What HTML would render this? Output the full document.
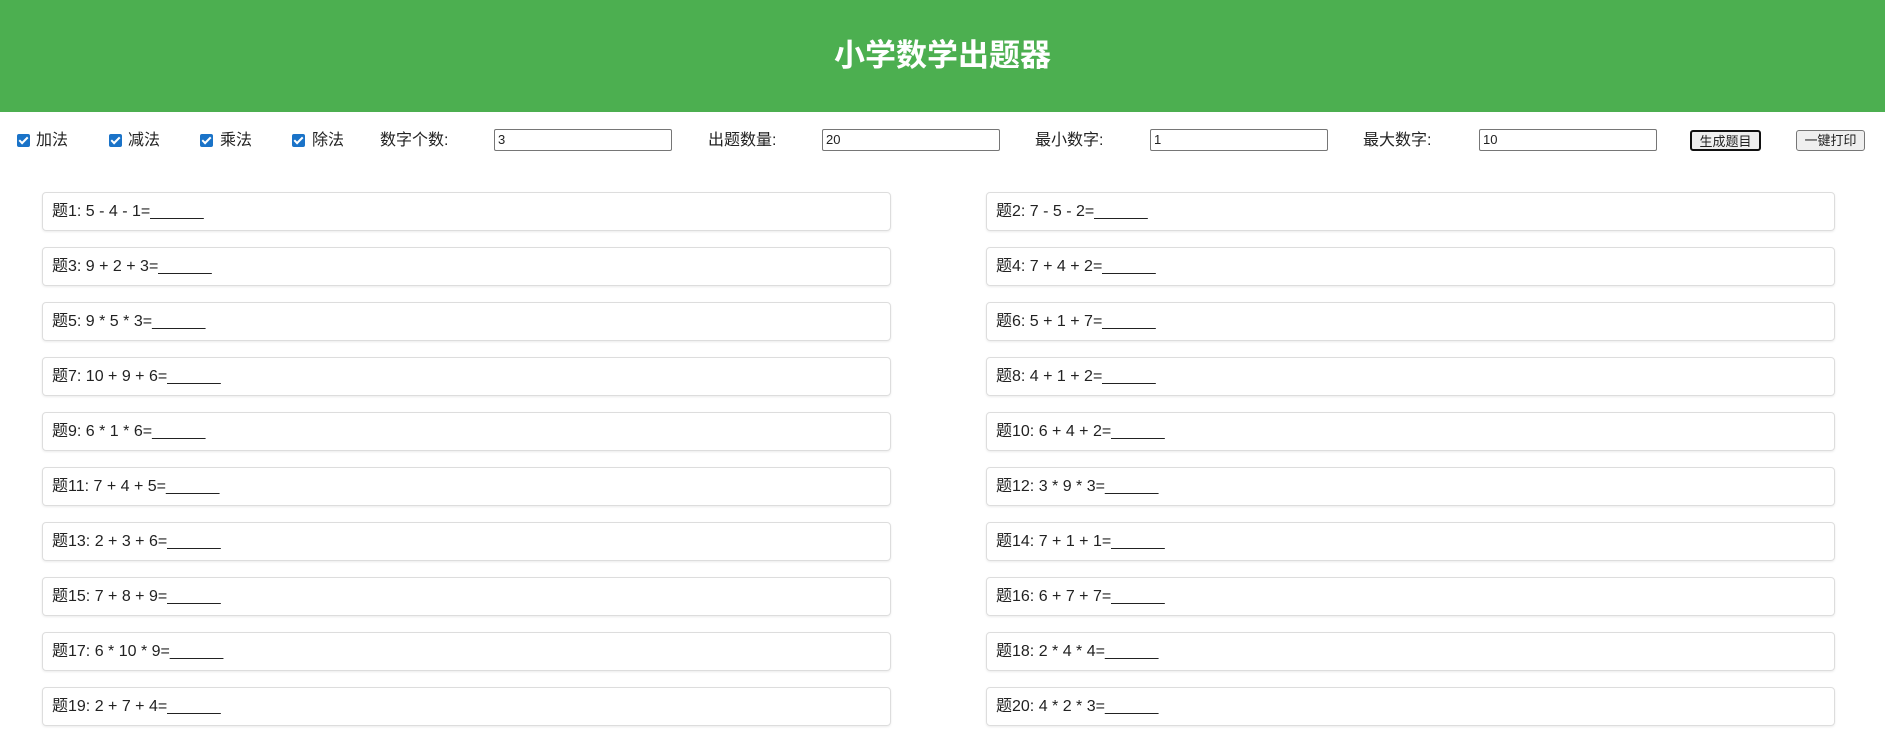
<!DOCTYPE html>
<html><head><meta charset="utf-8">
<style>
*{box-sizing:border-box}
body{margin:0;background:#fff;font-family:"Liberation Sans","Noto Sans CJK SC",sans-serif;color:#222;width:1885px;height:751px;overflow:hidden;position:relative}
.hdr{position:absolute;left:0;top:0;width:1885px;height:112px;background:#4caf50;color:#fff;font-weight:bold;font-size:31px;text-align:center;line-height:112px}
.c{position:absolute;font-size:16px;line-height:20px}
.cb{position:absolute;width:13px;height:13px;background:#1a73c8;border-radius:2px;top:134px}
.cb:after{content:"";position:absolute;left:4px;top:1px;width:3px;height:7px;border:solid #fff;border-width:0 2px 2px 0;transform:rotate(45deg)}
.in{position:absolute;top:129px;height:22px;border:1px solid #767676;border-radius:2px;font-size:13px;line-height:20px;padding-left:3px;width:178px}
.btn{position:absolute;top:130px;height:21px;border:1px solid #767676;border-radius:3px;background:#efefef;font-size:13px;line-height:19px;text-align:center}
.box{position:absolute;width:849px;height:39px;border:1px solid #ddd;border-radius:4px;box-shadow:0 1px 2px rgba(0,0,0,.08);font-size:16px;line-height:37px;padding-left:9px;color:#222}
</style></head><body>
<div class="hdr">小学数学出题器</div>
<div class="cb" style="left:17px"></div><div class="c" style="left:36px;top:131px">加法</div>
<div class="cb" style="left:109px"></div><div class="c" style="left:128px;top:131px">减法</div>
<div class="cb" style="left:200px"></div><div class="c" style="left:220px;top:131px">乘法</div>
<div class="cb" style="left:292px"></div><div class="c" style="left:312px;top:131px">除法</div>
<div class="c" style="left:380px;top:131px">数字个数:</div><div class="in" style="left:494px">3</div>
<div class="c" style="left:708px;top:131px">出题数量:</div><div class="in" style="left:822px">20</div>
<div class="c" style="left:1035px;top:131px">最小数字:</div><div class="in" style="left:1150px">1</div>
<div class="c" style="left:1363px;top:131px">最大数字:</div><div class="in" style="left:1479px">10</div>
<div class="btn" style="left:1690px;width:71px;border:2px solid #111">生成题目</div>
<div class="btn" style="left:1796px;width:69px">一键打印</div>

<div class="box" style="left:42px;top:192px">题1: 5 - 4 - 1=______</div>
<div class="box" style="left:986px;top:192px">题2: 7 - 5 - 2=______</div>
<div class="box" style="left:42px;top:247px">题3: 9 + 2 + 3=______</div>
<div class="box" style="left:986px;top:247px">题4: 7 + 4 + 2=______</div>
<div class="box" style="left:42px;top:302px">题5: 9 * 5 * 3=______</div>
<div class="box" style="left:986px;top:302px">题6: 5 + 1 + 7=______</div>
<div class="box" style="left:42px;top:357px">题7: 10 + 9 + 6=______</div>
<div class="box" style="left:986px;top:357px">题8: 4 + 1 + 2=______</div>
<div class="box" style="left:42px;top:412px">题9: 6 * 1 * 6=______</div>
<div class="box" style="left:986px;top:412px">题10: 6 + 4 + 2=______</div>
<div class="box" style="left:42px;top:467px">题11: 7 + 4 + 5=______</div>
<div class="box" style="left:986px;top:467px">题12: 3 * 9 * 3=______</div>
<div class="box" style="left:42px;top:522px">题13: 2 + 3 + 6=______</div>
<div class="box" style="left:986px;top:522px">题14: 7 + 1 + 1=______</div>
<div class="box" style="left:42px;top:577px">题15: 7 + 8 + 9=______</div>
<div class="box" style="left:986px;top:577px">题16: 6 + 7 + 7=______</div>
<div class="box" style="left:42px;top:632px">题17: 6 * 10 * 9=______</div>
<div class="box" style="left:986px;top:632px">题18: 2 * 4 * 4=______</div>
<div class="box" style="left:42px;top:687px">题19: 2 + 7 + 4=______</div>
<div class="box" style="left:986px;top:687px">题20: 4 * 2 * 3=______</div>
</body></html>
